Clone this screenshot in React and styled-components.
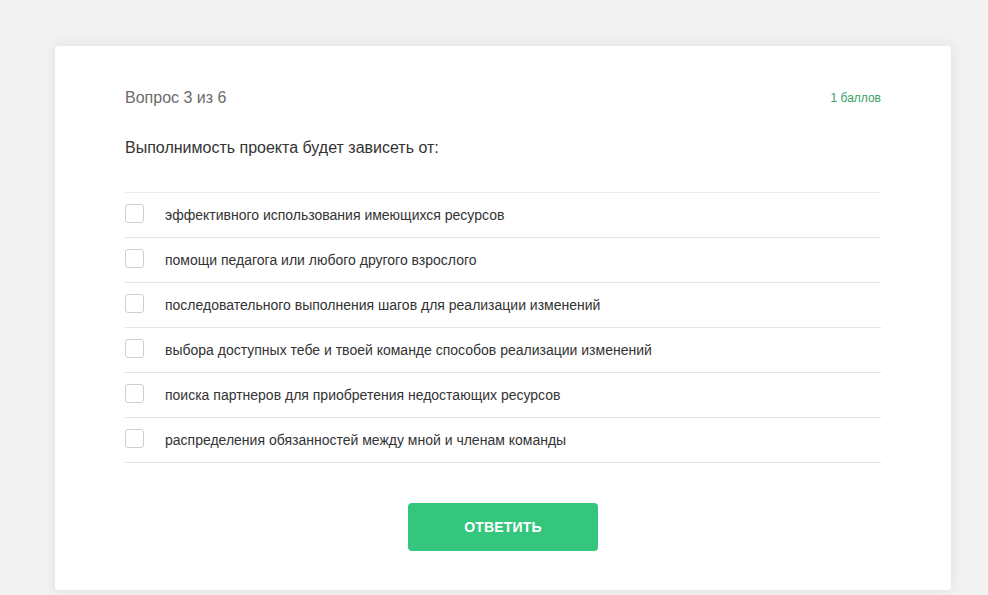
import React, { useState } from 'react';
import styled, { createGlobalStyle } from 'styled-components';

const GlobalStyle = createGlobalStyle`
    html, body {
        margin: 0;
        padding: 0;
        background: #f2f2f2;
        font-family: Arial, "Liberation Sans", sans-serif;
    }
`

const Page = styled.div`
    padding: 46px 37px 0 55px;
    height: 595px;
    box-sizing: border-box;
    overflow: hidden;
`

const Card = styled.div`
    width: 896px;
    height: 544px;
    box-sizing: border-box;
    background: #fff;
    box-shadow: 0 0 12px 2px rgba(0, 0, 0, 0.06);
    border-radius: 3px;
    padding: 42px 70px 0 70px;
`

const Header = styled.div`
    display: flex;
    justify-content: space-between;
    align-items: center;
    height: 20px;
`

const Counter = styled.div`
    font-size: 16px;
    color: #6b6b6b;
`

const Points = styled.div`
    font-size: 12px;
    color: #3aa067;
`

const Question = styled.div`
    margin-top: 30px;
    font-size: 16px;
    color: #333;
    line-height: 20px;
`

const List = styled.div`
    margin-top: 34px;
    border-top: 1px solid #ececec;
`

const Row = styled.label`
    display: flex;
    align-items: center;
    height: 44px;
    border-bottom: 1px solid #e4e4e4;
    cursor: pointer;
`

const Box = styled.span`
    width: 17px;
    height: 17px;
    flex: none;
    border: 1px solid ${p => (p.checked ? '#35c67e' : '#cfcfcf')};
    background: ${p => (p.checked ? '#35c67e' : '#fff')};
    border-radius: 3px;
    margin-top: -3px;
`

const Label = styled.span`
    margin-left: 21px;
    font-size: 14px;
    color: #333;
`

const Footer = styled.div`
    display: flex;
    justify-content: center;
    margin-top: 40px;
`

const Button = styled.button`
    width: 190px;
    height: 48px;
    border: none;
    border-radius: 4px;
    background: #35c67e;
    color: #fff;
    font-family: Arial, "Liberation Sans", sans-serif;
    font-weight: bold;
    font-size: 14px;
    letter-spacing: 0.2px;
    cursor: pointer;
`

const answers = [
    'эффективного использования имеющихся ресурсов',
    'помощи педагога или любого другого взрослого',
    'последовательного выполнения шагов для реализации изменений',
    'выбора доступных тебе и твоей команде способов реализации изменений',
    'поиска партнеров для приобретения недостающих ресурсов',
    'распределения обязанностей между мной и членам команды',
]

const App = () => {

    const [ checked, setChecked ] = useState([])

    const toggle = i =>
        setChecked(c => (c.includes(i) ? c.filter(x => x !== i) : [...c, i]))

    return (
        <Page>
            <GlobalStyle />
            <Card>
                <Header>
                    <Counter>Вопрос 3 из 6</Counter>
                    <Points>1 баллов</Points>
                </Header>
                <Question>Выполнимость проекта будет зависеть от:</Question>
                <List>
                    { answers.map((a, i) => (
                        <Row key={i} onClick={() => toggle(i)}>
                            <Box checked={checked.includes(i)} />
                            <Label>{ a }</Label>
                        </Row>
                    )) }
                </List>
                <Footer>
                    <Button>ОТВЕТИТЬ</Button>
                </Footer>
            </Card>
        </Page>
    )
}

export default App;
